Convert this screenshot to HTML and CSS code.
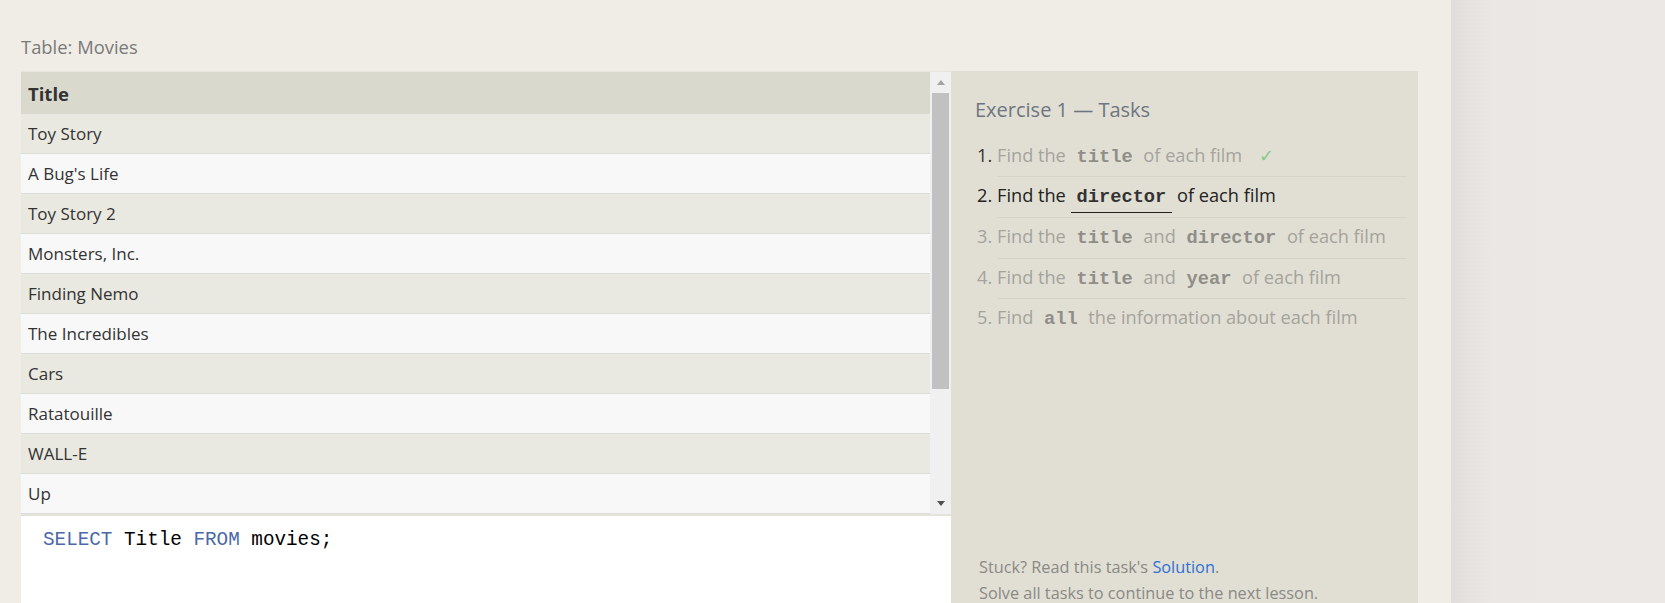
FILE: index.html
```html
<!DOCTYPE html>
<html>
<head>
<meta charset="utf-8">
<link rel="stylesheet" href="styles.css">
</head>
<body>
<div class="page">
  <main class="main">
    <div class="table-label">Table: Movies</div>
    <div class="workspace">
      <div class="left">
        <div class="table-wrap">
          <div class="table-scroll">
            <table class="movies">
              <thead><tr><th>Title</th></tr></thead>
              <tbody>
                <tr><td>Toy Story</td></tr>
                <tr><td>A Bug's Life</td></tr>
                <tr><td>Toy Story 2</td></tr>
                <tr><td>Monsters, Inc.</td></tr>
                <tr><td>Finding Nemo</td></tr>
                <tr><td>The Incredibles</td></tr>
                <tr><td>Cars</td></tr>
                <tr><td>Ratatouille</td></tr>
                <tr><td>WALL-E</td></tr>
                <tr><td>Up</td></tr>
              </tbody>
            </table>
          </div>
          <div class="scrollbar">
            <div class="sb-btn"><span class="arrow-up"></span></div>
            <div class="sb-track"><div class="sb-thumb"></div></div>
            <div class="sb-btn"><span class="arrow-down"></span></div>
          </div>
        </div>
        <div class="editor"><span class="kw">SELECT</span> Title <span class="kw">FROM</span> movies;</div>
      </div>
      <section class="tasks">
        <h2 class="tasks-title">Exercise 1 — Tasks</h2>
        <ol class="task-list">
          <li class="done"><span class="txt">Find the <code>title</code> of each film</span><span class="check">✓</span></li>
          <li class="active">Find the <code class="current">director</code> of each film</li>
          <li>Find the <code>title</code> and <code>director</code> of each film</li>
          <li>Find the <code>title</code> and <code>year</code> of each film</li>
          <li>Find <code>all</code> the information about each film</li>
        </ol>
        <div class="tasks-footer">
          <div>Stuck? Read this task's <a class="link" href="#">Solution</a>.</div>
          <div>Solve all tasks to continue to the next lesson.</div>
        </div>
      </section>
    </div>
  </main>
  <aside class="side"></aside>
</div>
</body>
</html>
```

FILE: styles.css
```css
html, body {
  margin: 0;
  padding: 0;
  height: 100%;
  overflow: hidden;
}
body {
  font-family: "Open Sans", "Liberation Sans", sans-serif;
  color: #333;
}
.page {
  display: flex;
  height: 100%;
}
.main {
  width: 1451px;
  flex: none;
  background: #f0ede6;
  padding: 35px 33px 0 21px;
  box-sizing: border-box;
}
.side {
  flex: 1;
  background: linear-gradient(to right, #e1dddb 0px, #ebe7e4 40px, #ece8e5 100%);
}
.table-label {
  font-size: 18.4px;
  line-height: 24px;
  color: #7a7a7a;
  margin-bottom: 12px;
}
.workspace {
  display: flex;
  align-items: stretch;
}
.left {
  width: 930px;
  flex: none;
  display: flex;
  flex-direction: column;
}
.table-wrap {
  display: flex;
  border-top: 1px solid #e6e4dc;
  border-bottom: 1px solid #e6e4dc;
  height: 442px;
  overflow: hidden;
}
.table-scroll {
  flex: 1;
  overflow: hidden;
}
.movies {
  width: 100%;
  border-collapse: collapse;
  font-size: 17px;
  line-height: 23px;
}
.movies th {
  text-align: left;
  font-weight: 700;
  font-size: 18.5px;
  background: #dad9cd;
  padding: 10px 7px 9px;
  color: #333;
}
.movies td {
  padding: 8px 7px;
  border-bottom: 1px solid #dcdcd8;
  color: #333;
}
.movies tbody tr:nth-child(odd) td {
  background: #e9e9e1;
}
.movies tbody tr:nth-child(even) td {
  background: #f8f8f8;
}
.scrollbar {
  width: 21px;
  flex: none;
  background: #f0f0f0;
  display: flex;
  flex-direction: column;
}
.sb-btn {
  height: 21px;
  display: flex;
  align-items: center;
  justify-content: center;
}
.arrow-up {
  width: 0;
  height: 0;
  border-left: 4.5px solid transparent;
  border-right: 4.5px solid transparent;
  border-bottom: 5px solid #a3a3a3;
}
.arrow-down {
  width: 0;
  height: 0;
  border-left: 4.5px solid transparent;
  border-right: 4.5px solid transparent;
  border-top: 5px solid #505050;
}
.sb-track {
  flex: 1;
  padding: 0 2px;
}
.sb-thumb {
  height: 296px;
  background: #c1c1c1;
}
.editor {
  background: #fff;
  border-top: 1px solid #e2e0d8;
  height: 124px;
  padding: 12px 22px 0;
  box-sizing: border-box;
  font-family: "Liberation Mono", "DejaVu Sans Mono", monospace;
  font-size: 19.3px;
  line-height: 24px;
  color: #000;
  white-space: pre;
}
.kw {
  color: #4a68aa;
}
.tasks {
  width: 467px;
  flex: none;
  background: #e1dfd4;
  box-sizing: border-box;
  padding: 25px 11px 33px 24px;
  display: flex;
  flex-direction: column;
}
.tasks-title {
  margin: 0;
  font-size: 20px;
  font-weight: 400;
  line-height: 27.2px;
  color: #6d7580;
}
.task-list {
  margin: 13.4px 0 0;
  padding-left: 22px;
  font-size: 18.2px;
  color: #a5a39c;
}
.task-list li {
  padding: 7px 0 9px;
  line-height: 23.7px;
}
.task-list li + li {
  border-top: 1px solid #d6d3c8;
}
.task-list li.done {
  color: #333;
}
.task-list li.done .txt {
  color: #a5a39c;
}
.task-list li.active {
  color: #222;
}
.task-list code {
  font-family: "Liberation Mono", "DejaVu Sans Mono", monospace;
  font-weight: 700;
  font-size: 18.7px;
  line-height: 1;
  padding: 0 6px;
  color: #8f8e88;
}
.task-list li.active code {
  color: #333;
}
.task-list code.current {
  padding-bottom: 3.7px;
  border-bottom: 1px solid #222;
}
.check {
  color: #86c98a;
  margin-left: 17px;
  font-size: 18px;
}
.tasks-footer {
  margin-top: auto;
  padding-left: 4px;
  font-size: 16.3px;
  line-height: 25.5px;
  color: #8a8984;
}
.link {
  color: #2f6fd6;
  text-decoration: none;
}
```
